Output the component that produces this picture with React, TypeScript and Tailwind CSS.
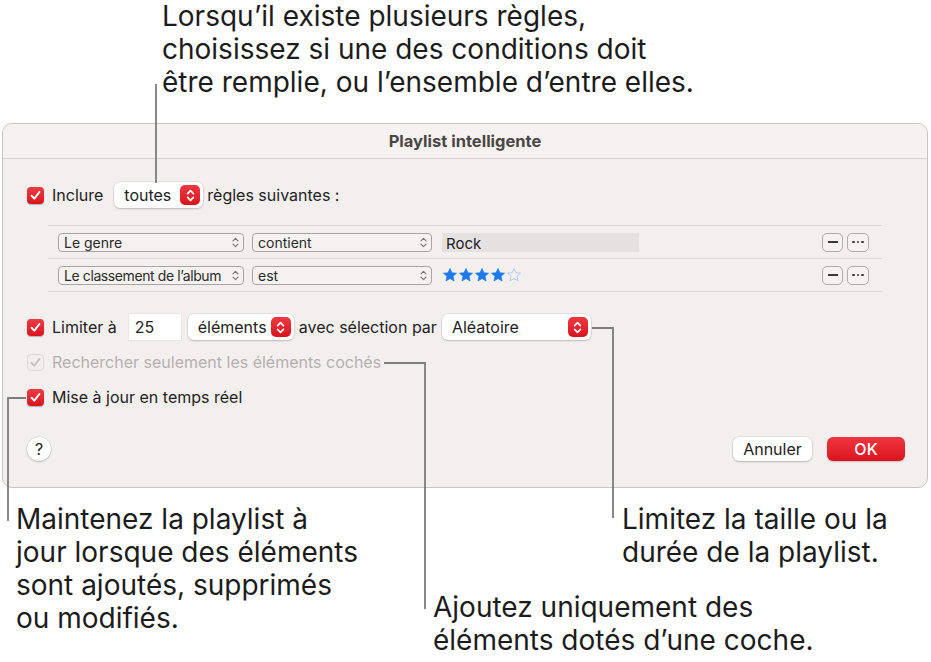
import React from 'react';

function Check({ disabled = false }: { disabled?: boolean }) {
  if (disabled) {
    return (
      <span className="w-[17px] h-[17px] rounded-[4px] border border-[#dcd7d7] bg-[#f2eeee] flex items-center justify-center shrink-0">
        <svg width="11" height="11" viewBox="0 0 11 11">
          <path d="M1.6 5.8 L4.3 8.6 L9.4 2" fill="none" stroke="#c4bfbf" strokeWidth="1.8" strokeLinecap="round" strokeLinejoin="round" />
        </svg>
      </span>
    );
  }
  return (
    <span className="w-[17px] h-[17px] rounded-[4px] bg-gradient-to-b from-[#f03a44] to-[#d9111e] flex items-center justify-center shrink-0 shadow-[0_0.5px_1px_rgba(0,0,0,0.25)]">
      <svg width="11" height="11" viewBox="0 0 11 11">
        <path d="M1.6 5.8 L4.3 8.6 L9.4 2" fill="none" stroke="white" strokeWidth="2" strokeLinecap="round" strokeLinejoin="round" />
      </svg>
    </span>
  );
}

function RedStepper() {
  return (
    <span className="w-[20px] h-[20px] rounded-[5px] bg-gradient-to-b from-[#f03842] to-[#d8111d] flex items-center justify-center">
      <svg width="9" height="13" viewBox="0 0 9 13">
        <path d="M1.6 4.6 L4.5 1.7 L7.4 4.6 M1.6 8.4 L4.5 11.3 L7.4 8.4" fill="none" stroke="white" strokeWidth="1.7" strokeLinecap="round" strokeLinejoin="round" />
      </svg>
    </span>
  );
}

function GrayChevrons() {
  return (
    <svg width="7" height="11" viewBox="0 0 7 11" className="shrink-0">
      <path d="M1 3.8 L3.5 1.3 L6 3.8 M1 7.2 L3.5 9.7 L6 7.2" fill="none" stroke="#7a7676" strokeWidth="1.2" strokeLinecap="round" strokeLinejoin="round" />
    </svg>
  );
}

function Popup({ label, className }: { label: string; className: string }) {
  return (
    <div
      className={`h-[26px] rounded-[6px] bg-white shadow-[0_0_0_0.5px_rgba(0,0,0,0.1),0_1px_2px_rgba(0,0,0,0.18)] flex items-center justify-between pl-[10px] pr-[3px] ${className}`}
    >
      <span>{label}</span>
      <RedStepper />
    </div>
  );
}

function SmallPopup({ label, className }: { label: string; className: string }) {
  return (
    <div
      className={`h-[19px] rounded-[4px] border border-[#a9a4a4] bg-[#f6f2f2] flex items-center justify-between pl-[5px] pr-[4px] text-[14px] text-[#2a2a2a] ${className}`}
    >
      <span className="whitespace-nowrap">{label}</span>
      <GrayChevrons />
    </div>
  );
}

function RowButtons() {
  return (
    <div className="flex items-center gap-[4px]">
      <span className="w-[21px] h-[19px] rounded-[5px] border border-[#b1acac] bg-[#f6f2f2] flex items-center justify-center">
        <span className="w-[10px] h-[1.5px] bg-[#3a3a3a]" />
      </span>
      <span className="w-[22px] h-[19px] rounded-[5px] border border-[#b1acac] bg-[#f6f2f2] flex items-center justify-center gap-[2px]">
        <span className="w-[2.5px] h-[2.5px] rounded-full bg-[#3a3a3a]" />
        <span className="w-[2.5px] h-[2.5px] rounded-full bg-[#3a3a3a]" />
        <span className="w-[2.5px] h-[2.5px] rounded-full bg-[#3a3a3a]" />
      </span>
    </div>
  );
}

function Star({ filled }: { filled: boolean }) {
  return (
    <svg width="16" height="16" viewBox="0 0 24 24">
      <path
        d="M12 2.2 L14.9 8.6 L21.8 9.3 L16.6 14 L18.1 20.9 L12 17.4 L5.9 20.9 L7.4 14 L2.2 9.3 L9.1 8.6 Z"
        fill={filled ? '#1a7af4' : 'none'}
        stroke={filled ? '#1a7af4' : '#a8c7f3'}
        strokeWidth={filled ? 1 : 1.4}
        strokeLinejoin="round"
      />
    </svg>
  );
}

export default function App() {
  return (
    <div className="relative w-[931px] h-[662px] bg-white overflow-hidden [font-family:Inter,sans-serif] text-[#1c1c1c]">
      {/* callout au-dessus */}
      <div className="pl-[162px] text-[28px] leading-[33px] whitespace-nowrap">
        Lorsqu’il existe plusieurs règles,
        <br />
        choisissez si une des conditions doit
        <br />
        être remplie, ou l’ensemble d’entre elles.
      </div>

      {/* fenêtre */}
      <div className="ml-[2px] mt-[24px] w-[926px] h-[365px] rounded-[10px] border border-[#c9c4c4] bg-[#f4efef] overflow-hidden text-[16px] text-[#222]">
        <div className="h-[35px] bg-[#f6f2f2] border-b border-[#d8d3d3] flex items-center justify-center">
          <span className="text-[16.5px] font-bold text-[#4a4646]">Playlist intelligente</span>
        </div>

        <div className="pl-[24px] pr-[22px]">
          <div className="mt-[23px] h-[26px] flex items-center">
            <Check />
            <span className="ml-[8px]">Inclure</span>
            <Popup label="toutes" className="ml-[11px] w-[89px]" />
            <span className="ml-[4px]">règles suivantes :</span>
          </div>

          <div className="mt-[17px] ml-[21px] w-[834px] border-b border-[#dcd7d7]">
            <div className="h-[33px] border-t border-[#dcd7d7] flex items-center pl-[10px] pr-[13px]">
              <SmallPopup label="Le genre" className="w-[186px]" />
              <SmallPopup label="contient" className="ml-[8px] w-[180px]" />
              <div className="ml-[10px] w-[197px] h-[19px] bg-[#e6e1e1] pl-[4px] pt-[1px] text-[15px] leading-[19px]">Rock</div>
              <div className="ml-auto">
                <RowButtons />
              </div>
            </div>
            <div className="h-[33px] border-t border-[#dcd7d7] flex items-center pl-[10px] pr-[13px]">
              <SmallPopup label="Le classement de l’album" className="w-[186px] tracking-[-0.4px]" />
              <SmallPopup label="est" className="ml-[8px] w-[180px]" />
              <div className="ml-[10px] flex items-center">
                <Star filled />
                <Star filled />
                <Star filled />
                <Star filled />
                <Star filled={false} />
              </div>
              <div className="ml-auto">
                <RowButtons />
              </div>
            </div>
          </div>

          <div className="mt-[22px] h-[26px] flex items-center">
            <Check />
            <span className="ml-[8px]">Limiter à</span>
            <div className="ml-[12px] w-[52px] h-[26px] bg-white flex items-center pl-[6px] shadow-[0_0_0_0.5px_rgba(0,0,0,0.08)]">25</div>
            <Popup label="éléments" className="ml-[7px] w-[106px]" />
            <span className="ml-[5px]">avec sélection par</span>
            <Popup label="Aléatoire" className="ml-[5px] w-[149px]" />
          </div>

          <div className="mt-[11px] h-[22px] flex items-center">
            <Check disabled />
            <span className="ml-[8px] text-[#b4afaf]">Rechercher seulement les éléments cochés</span>
          </div>

          <div className="mt-[13px] h-[22px] flex items-center">
            <Check />
            <span className="ml-[8px]">Mise à jour en temps réel</span>
          </div>

          <div className="mt-[29px] h-[24px] flex items-center">
            <span className="w-[24px] h-[24px] rounded-full bg-white shadow-[0_0_0_0.5px_rgba(0,0,0,0.12),0_1px_2px_rgba(0,0,0,0.2)] flex items-center justify-center text-[16px]">
              ?
            </span>
            <button className="ml-auto w-[79px] h-[24px] rounded-[6px] bg-white shadow-[0_0_0_0.5px_rgba(0,0,0,0.12),0_1px_2px_rgba(0,0,0,0.2)] text-[16px] text-[#222]">
              Annuler
            </button>
            <button className="ml-[15px] w-[78px] h-[24px] rounded-[6px] bg-gradient-to-b from-[#ef3540] to-[#da111d] shadow-[0_1px_1.5px_rgba(0,0,0,0.2)] text-[16px] font-medium text-white">
              OK
            </button>
          </div>
        </div>
      </div>

      {/* callouts en dessous */}
      <div className="mt-[15px] flex text-[28px] leading-[33px] whitespace-nowrap">
        <div className="pl-[16px] w-[433px]">
          Maintenez la playlist à
          <br />
          jour lorsque des éléments
          <br />
          sont ajoutés, supprimés
          <br />
          ou modifiés.
        </div>
        <div className="flex flex-col">
          <div className="pl-[189px]">
            Limitez la taille ou la
            <br />
            durée de la playlist.
          </div>
          <div className="mt-[22px]">
            Ajoutez uniquement des
            <br />
            éléments dotés d’une coche.
          </div>
        </div>
      </div>

      {/* traits de renvoi */}
      <svg className="absolute inset-0 pointer-events-none" width="931" height="662" viewBox="0 0 931 662">
        <g fill="none" stroke="#7c7c7c" strokeWidth="1.8">
          <path d="M156 84 V183" />
          <path d="M592 328 H613 V518" />
          <path d="M384 363 H425 V609" />
          <path d="M26 398 H8 V521" />
        </g>
      </svg>
    </div>
  );
}
